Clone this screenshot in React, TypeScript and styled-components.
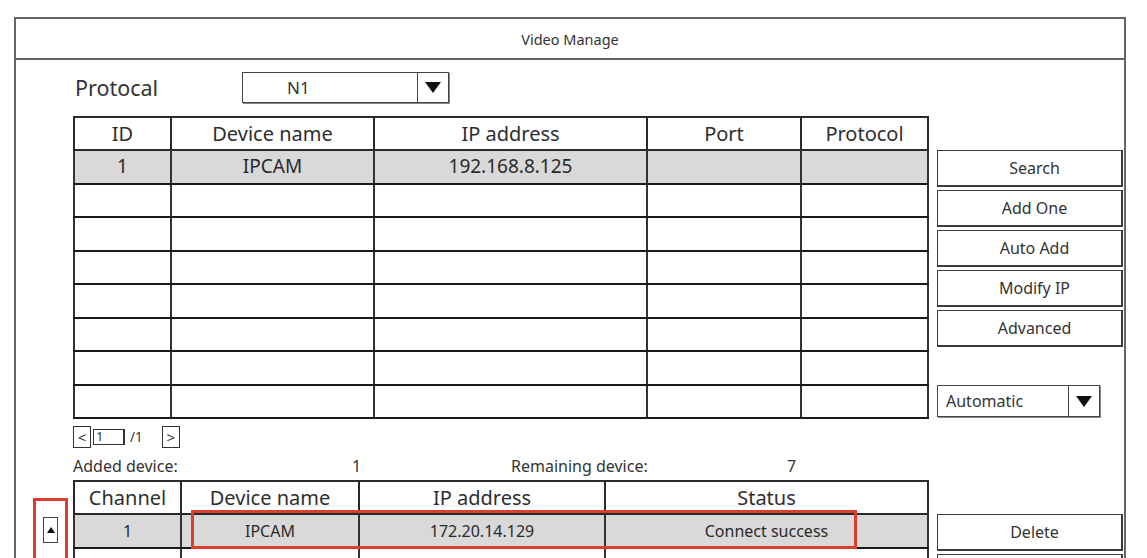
import { FC } from "react";
import styled, { createGlobalStyle } from "styled-components";

const GlobalStyle = createGlobalStyle`
  html, body {
    margin: 0;
    padding: 0;
    background: #ffffff;
    overflow: hidden;
  }
  body {
    font-family: "Noto Sans", "Open Sans", sans-serif;
    color: #2e2e2e;
  }
`;

const Frame = styled.div`
  margin: 17px 0 0 14px;
  width: 1108px;
  height: 640px;
  border: 2px solid #666;
  border-bottom: none;
`;

const TitleBar = styled.div`
  height: 39px;
  border-bottom: 2px solid #666;
  display: flex;
  align-items: center;
  justify-content: center;
  font-size: 14.5px;
  color: #333;
`;

const Section = styled.div<{ $mt?: number }>`
  display: flex;
  margin-top: ${({ $mt }) => $mt ?? 0}px;
`;

const Gutter = styled.div`
  width: 57px;
  flex-shrink: 0;
  display: flex;
  justify-content: flex-start;
`;

const Main = styled.div`
  width: 856px;
  flex-shrink: 0;
  position: relative;
`;

const Side = styled.div<{ $pt?: number }>`
  width: 186px;
  margin-left: 8px;
  flex-shrink: 0;
  display: flex;
  flex-direction: column;
  gap: 3px;
  padding-top: ${({ $pt }) => $pt ?? 0}px;
`;

const ProtocolRow = styled.div`
  display: flex;
  align-items: center;
  height: 30px;
  margin: 12px 0 0 59px;
`;

const Label = styled.span`
  font-size: 21.5px;
  width: 167px;
  color: #333;
`;

const Select = styled.div<{ $width: number; $size: number }>`
  display: flex;
  width: ${({ $width }) => $width}px;
  height: ${({ $size }) => $size}px;
  box-sizing: border-box;
  border: 1.5px solid #444;
  box-shadow: 1px 1px 0 #888;
  background: #fff;
`;

const SelectText = styled.div<{ $padLeft: number; $font: number }>`
  flex: 1;
  display: flex;
  align-items: center;
  padding-left: ${({ $padLeft }) => $padLeft}px;
  font-size: ${({ $font }) => $font}px;
  color: #333;
`;

const SelectArrow = styled.div`
  width: 30px;
  border-left: 1.5px solid #444;
  display: flex;
  align-items: center;
  justify-content: center;
`;

const Arrow = styled.div`
  width: 0;
  height: 0;
  border-left: 8px solid transparent;
  border-right: 8px solid transparent;
  border-top: 11px solid #111;
`;

const Table = styled.table`
  border-collapse: collapse;
  table-layout: fixed;
`;

const Th = styled.th<{ $font: number }>`
  height: 31px;
  padding: 0;
  border: 2px solid #2a2a2a;
  font-weight: 400;
  font-size: ${({ $font }) => $font}px;
  color: #2e2e2e;
  text-align: center;
  vertical-align: middle;
  line-height: 1;
`;

const Td = styled.td<{ $font: number; $h: number }>`
  height: ${({ $h }) => $h}px;
  padding: 0;
  border: 2px solid #1a1a1a;
  border-left-color: #333;
  border-right-color: #333;
  font-size: ${({ $font }) => $font}px;
  text-align: center;
  vertical-align: middle;
  line-height: 1;
  color: #2a2a2a;
`;

const Tr = styled.tr<{ $selected?: boolean }>`
  background: ${({ $selected }) => ($selected ? "#d9d9d9" : "#ffffff")};
`;

const SideButton = styled.div`
  height: 37px;
  box-sizing: border-box;
  border: 1.5px solid #3a3a3a;
  border-bottom-width: 2.5px;
  border-right-width: 2px;
  padding-left: 10px;
  display: flex;
  align-items: center;
  justify-content: center;
  font-size: 16px;
  color: #333;
  background: #fff;
`;

const SideBottom = styled.div`
  margin-top: auto;
  margin-bottom: 2px;
`;

const Pager = styled.div`
  display: flex;
  align-items: center;
  height: 22px;
  margin-top: 7px;
  font-size: 14px;
  color: #333;
`;

const PageBtn = styled.div`
  width: 18px;
  height: 22px;
  box-sizing: border-box;
  border: 1.5px solid #333;
  display: flex;
  align-items: center;
  justify-content: center;
  font-size: 15px;
  line-height: 1;
`;

const PageInput = styled.div`
  width: 32px;
  height: 16px;
  margin-left: 2px;
  box-sizing: border-box;
  border: 1.5px solid #333;
  border-right-width: 2px;
  font-size: 13px;
  line-height: 13px;
  padding-left: 2px;
`;

const PageTotal = styled.span`
  margin: 0 19px 0 5px;
  font-size: 13.5px;
`;

const Counts = styled.div`
  display: grid;
  grid-template-columns: 279px 159px 276px 1fr;
  height: 20px;
  align-items: center;
  margin-top: 7px;
  font-size: 16px;
  color: #333;
`;

const Marker = styled.div`
  margin: 18px 0 0 17px;
  width: 35px;
  height: 80px;
  box-sizing: border-box;
  border: 3px solid #d8402c;
  border-bottom: none;
  display: flex;
  justify-content: center;
  padding-top: 16px;
`;

const UpButton = styled.div`
  width: 15px;
  height: 26px;
  box-sizing: border-box;
  border: 1.5px solid #444;
  display: flex;
  align-items: center;
  justify-content: center;
`;

const UpArrow = styled.div`
  width: 0;
  height: 0;
  border-left: 4px solid transparent;
  border-right: 4px solid transparent;
  border-bottom: 6px solid #111;
`;

const Highlight = styled.div`
  position: absolute;
  left: 118px;
  top: 30px;
  width: 666px;
  height: 39px;
  box-sizing: border-box;
  border: 3px solid #d8402c;
  pointer-events: none;
`;

const topCols = [
  { label: "ID", w: 97 },
  { label: "Device name", w: 203 },
  { label: "IP address", w: 273 },
  { label: "Port", w: 154 },
  { label: "Protocol", w: 127 },
];

const bottomCols = [
  { label: "Channel", w: 107 },
  { label: "Device name", w: 178 },
  { label: "IP address", w: 246 },
  { label: "Status", w: 323 },
];

const topRows = [
  ["1", "IPCAM", "192.168.8.125", "", ""],
  ...Array.from({ length: 7 }, () => ["", "", "", "", ""]),
];

const bottomRows = [
  ["1", "IPCAM", "172.20.14.129", "Connect success"],
  ...Array.from({ length: 3 }, () => ["", "", "", ""]),
];

const sideButtons = ["Search", "Add One", "Auto Add", "Modify IP", "Advanced"];

type Col = { label: string; w: number };

const Grid: FC<{ cols: Col[]; rows: string[][]; font: number; rowH: number }> = ({
  cols,
  rows,
  font,
  rowH,
}) => (
  <Table>
    <colgroup>
      {cols.map((c) => (
        <col key={c.label} style={{ width: c.w }} />
      ))}
    </colgroup>
    <thead>
      <tr>
        {cols.map((c) => (
          <Th key={c.label} $font={20}>
            {c.label}
          </Th>
        ))}
      </tr>
    </thead>
    <tbody>
      {rows.map((row, i) => (
        <Tr key={i} $selected={i === 0}>
          {row.map((cell, j) => (
            <Td key={j} $font={font} $h={rowH}>
              {cell}
            </Td>
          ))}
        </Tr>
      ))}
    </tbody>
  </Table>
);

const App: FC = () => {
  return (
    <>
      <GlobalStyle />
      <Frame>
        <TitleBar>Video Manage</TitleBar>

        <ProtocolRow>
          <Label>Protocal</Label>
          <Select $width={207} $size={31}>
            <SelectText $padLeft={44} $font={17}>
              N1
            </SelectText>
            <SelectArrow>
              <Arrow />
            </SelectArrow>
          </Select>
        </ProtocolRow>

        <Section $mt={14}>
          <Gutter />
          <Main>
            <Grid cols={topCols} rows={topRows} font={19} rowH={31.5} />
          </Main>
          <Side $pt={34}>
            {sideButtons.map((b) => (
              <SideButton key={b}>{b}</SideButton>
            ))}
            <SideBottom>
              <Select $width={163} $size={32}>
                <SelectText $padLeft={8} $font={16}>
                  Automatic
                </SelectText>
                <SelectArrow>
                  <Arrow />
                </SelectArrow>
              </Select>
            </SideBottom>
          </Side>
        </Section>

        <Section>
          <Gutter />
          <Main>
            <Pager>
              <PageBtn>&lt;</PageBtn>
              <PageInput>1</PageInput>
              <PageTotal>/1</PageTotal>
              <PageBtn>&gt;</PageBtn>
            </Pager>
            <Counts>
              <span>Added device:</span>
              <span>1</span>
              <span>Remaining device:</span>
              <span>7</span>
            </Counts>
          </Main>
        </Section>

        <Section $mt={5}>
          <Gutter>
            <Marker>
              <UpButton>
                <UpArrow />
              </UpButton>
            </Marker>
          </Gutter>
          <Main>
            <Grid cols={bottomCols} rows={bottomRows} font={16} rowH={32} />
            <Highlight />
          </Main>
          <Side $pt={34}>
            <SideButton>Delete</SideButton>
            <SideButton />
          </Side>
        </Section>
      </Frame>
    </>
  );
};

export default App;
